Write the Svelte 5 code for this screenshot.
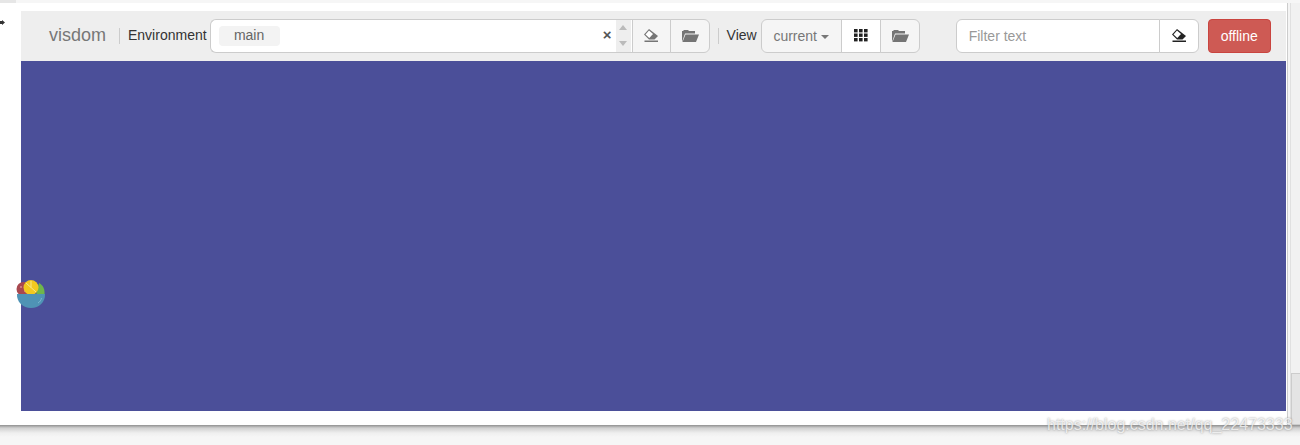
<script>
  const watermark = "https://blog.csdn.net/qq_22473333";
</script>

<div class="screen">
  <div class="top-strip"><span class="tab-stub"></span></div>
  <div class="middle">
    <div class="window">
      <div class="gutter"><span class="arrow"></span></div>
      <div class="page">
        <nav class="navbar">
          <span class="brand">visdom</span>
          <span class="divider first"></span>
          <span class="label">Environment</span>
          <div class="env-group">
            <div class="tree-select">
              <span class="tag">main</span>
              <span class="clear">×</span>
              <span class="spinner">
                <span class="up"></span>
                <span class="down"></span>
              </span>
            </div>
            <button class="btn square">
              <svg width="16" height="16" viewBox="0 0 16 16"><use href="#eraser" /></svg>
            </button>
            <button class="btn square end">
              <svg width="18" height="16" viewBox="0 0 18 16"><use href="#folder" /></svg>
            </button>
          </div>
          <span class="divider second"></span>
          <span class="label">View</span>
          <div class="view-group">
            <button class="btn current">current<span class="caret"></span></button>
            <button class="btn square white">
              <svg class="dark" width="14" height="14" viewBox="0 0 14 14"><use href="#grid" /></svg>
            </button>
            <button class="btn square end folder-btn">
              <svg width="18" height="16" viewBox="0 0 18 16"><use href="#folder" /></svg>
            </button>
          </div>
          <div class="filter-group">
            <input class="filter" placeholder="Filter text" />
            <button class="btn square end white">
              <svg class="dark" width="16" height="16" viewBox="0 0 16 16"><use href="#eraser" /></svg>
            </button>
          </div>
          <button class="offline">offline</button>
        </nav>
        <main class="canvas"></main>
      </div>
    </div>
    <div class="track"><span class="thumb"></span></div>
  </div>
  <div class="bottom"></div>

  <!-- the little fruit bowl sits over the edge of the canvas -->
  <svg class="bowl" width="30" height="30" viewBox="0 0 30 30">
    <circle cx="7.500" cy="10" r="7" fill="#a8484f" />
    <circle cx="5" cy="8" r="1" fill="#d98a8a" />
    <circle cx="9" cy="12" r="1" fill="#d98a8a" />
    <path d="M23 4 C27 6 29 10 28.500 16 L20 16 Z" fill="#6fb64a" />
    <circle cx="15" cy="8.500" r="7.500" fill="#f2c91f" />
    <path d="M15 8.500 L10 4 M15 8.500 L20 13 M15 8.500 L15 2" stroke="#f8e88a" stroke-width="1" />
    <path d="M1 15 H29 C29.500 23 23 29 15 29 C7 29 0.500 23 1 15 Z" fill="#4f93b5" />
    <path d="M22 24 C24 23 25 21 25.500 19" stroke="#7cb6d0" stroke-width="1" fill="none" />
  </svg>

  <span class="watermark">{watermark}</span>

  <svg class="defs" width="0" height="0">
    <defs>
      <g id="eraser">
        <path d="M6 1 L15 8 L11.500 11.500 H6 L1 6.500 Z" fill="currentColor" />
        <path d="M6 2.400 L2.500 6.400 L6.300 10 L10 6 Z" fill="#fff" />
        <rect x="1.500" y="12.500" width="13.500" height="1.500" fill="currentColor" />
      </g>
      <g id="folder">
        <path d="M1 14 V3 H2 L3 2 H7 L8 3 H14 V5.500 H4 Z" fill="currentColor" />
        <path d="M4.500 6.500 H18 L15 14 H1.500 Z" fill="currentColor" />
      </g>
      <g id="grid" fill="currentColor">
        <rect x="0" y="0" width="3.600" height="3.400" />
        <rect x="5" y="0" width="3.600" height="3.400" />
        <rect x="10" y="0" width="3.600" height="3.400" />
        <rect x="0" y="4.500" width="3.600" height="3.400" />
        <rect x="5" y="4.500" width="3.600" height="3.400" />
        <rect x="10" y="4.500" width="3.600" height="3.400" />
        <rect x="0" y="9" width="3.600" height="3.400" />
        <rect x="5" y="9" width="3.600" height="3.400" />
        <rect x="10" y="9" width="3.600" height="3.400" />
      </g>
    </defs>
  </svg>
</div>

<style>
  :global(body) {
    margin: 0;
    background: #fff;
  }

  .screen {
    position: relative;
    width: 1300px;
    height: 445px;
    overflow: hidden;
    display: flex;
    flex-direction: column;
    font-family: "Liberation Sans", Arial, sans-serif;
    font-size: 14px;
    color: #333;
  }

  .top-strip {
    height: 3px;
    background: #f6f6f6;
    display: flex;
    flex: none;
  }

  .tab-stub {
    width: 16px;
    background: #e6e6e6;
  }

  .middle {
    height: 422px;
    flex: none;
    display: flex;
    background: #f4f4f4;
  }

  .window {
    width: 1287px;
    flex: none;
    display: flex;
    background: #fff;
    border-right: 1px solid #ccc;
    box-sizing: content-box;
  }

  .gutter {
    width: 21px;
    flex: none;
    position: relative;
  }

  .arrow {
    position: absolute;
    left: 0;
    top: 17px;
    width: 5px;
    height: 5px;
    background: #333;
    clip-path: polygon(0 20%, 40% 20%, 40% 0, 100% 50%, 40% 100%, 40% 80%, 0 80%);
  }

  .page {
    width: 1265px;
    margin-top: 8px;
    flex: none;
  }

  .navbar {
    height: 50px;
    background: #eee;
    display: flex;
    align-items: center;
    padding-left: 28px;
    box-sizing: border-box;
  }

  .brand {
    font-size: 18px;
    color: #777;
    width: 70px;
    flex: none;
    padding-bottom: 2px;
  }

  .divider {
    width: 1px;
    height: 16px;
    background: #ccc;
    flex: none;
  }

  .divider.first {
    margin-right: 8px;
  }

  .divider.second {
    margin: 0 8px;
  }

  .label {
    margin-right: 4px;
    padding-bottom: 2px;
  }

  .env-group .btn:first-of-type {
    margin-left: 0;
    width: 39px;
  }

  .env-group {
    margin-left: -1px;
  }

  .env-group,
  .view-group,
  .filter-group {
    display: flex;
    height: 34px;
    flex: none;
  }

  .tree-select {
    width: 422px;
    box-sizing: border-box;
    display: flex;
    align-items: center;
    background: #fff;
    border: 1px solid #ccc;
    border-right: 0;
    border-radius: 6px 0 0 6px;
    padding-left: 8px;
  }

  .tag {
    background: #f3f3f3;
    color: #666;
    border-radius: 4px;
    width: 61px;
    height: 20px;
    line-height: 19px;
    text-align: center;
    flex: none;
    margin-top: -1px;
  }

  .clear {
    margin-left: auto;
    margin-right: 4px;
    font-weight: bold;
    color: #555;
    font-size: 15px;
    padding-bottom: 4px;
  }

  .spinner {
    width: 15px;
    height: 100%;
    background: #eee;
    display: flex;
    flex-direction: column;
    align-items: center;
    justify-content: space-between;
    padding: 5px 0 6px;
    box-sizing: border-box;
    flex: none;
    margin-right: 1px;
  }

  .up,
  .down {
    width: 0;
    height: 0;
    border-left: 4px solid transparent;
    border-right: 4px solid transparent;
  }

  .up {
    border-bottom: 5px solid #bbb;
  }

  .down {
    border-top: 5px solid #bbb;
  }

  .btn {
    height: 34px;
    box-sizing: border-box;
    margin: 0 0 0 -1px;
    padding: 0;
    background: #f5f5f5;
    border: 1px solid #ccc;
    color: #757575;
    font: inherit;
    display: flex;
    align-items: center;
    justify-content: center;
  }

  .square {
    width: 40px;
  }

  .end {
    border-radius: 0 6px 6px 0;
  }

  .white {
    background: #fff;
  }

  .dark {
    color: #222;
  }

  .current {
    width: 81px;
    margin-left: 0;
    border-radius: 6px 0 0 6px;
    color: #777;
  }

  .caret {
    margin-left: 4px;
    margin-top: 2px;
    width: 0;
    height: 0;
    border-left: 4px solid transparent;
    border-right: 4px solid transparent;
    border-top: 4px solid #777;
  }

  .filter-group {
    margin-left: 36px;
  }

  .filter {
    width: 204px;
    height: 34px;
    box-sizing: border-box;
    border: 1px solid #ccc;
    border-radius: 6px 0 0 6px;
    padding: 0 12px;
    font: inherit;
    outline: none;
    background: #fff;
  }

  .filter::placeholder {
    color: #999;
    opacity: 1;
  }

  .offline {
    width: 63px;
    height: 34px;
    margin-left: 9px;
    padding: 0;
    background: #ce5a54;
    border: 1px solid #c9443f;
    border-radius: 4px;
    color: #fff;
    font: inherit;
    flex: none;
  }

  .canvas {
    height: 350px;
    background: #4b4f99;
  }

  .track {
    margin-left: 2px;
    width: 10px;
    flex: none;
    background: #f1f1f1;
    border-left: 1px solid #e0e0e0;
    position: relative;
  }

  .thumb {
    position: absolute;
    left: 0;
    right: 0;
    top: 370px;
    bottom: 0;
    background: #e4e4e4;
    border: 1px solid #ccc;
    border-right: 0;
  }

  .bottom {
    flex: 1;
    background: linear-gradient(#8f8f8f, #d0d0d0 3px, #efefef 8px, #f6f6f6 12px);
  }

  .bowl {
    position: absolute;
    left: 16px;
    top: 279px;
  }

  .watermark {
    position: absolute;
    left: 1047px;
    top: 416px;
    font-size: 16px;
    color: rgba(255, 255, 255, 0.75);
    text-shadow: 0 0 2px rgba(120, 120, 120, 0.8);
    white-space: nowrap;
  }

  .defs {
    position: absolute;
  }
</style>
